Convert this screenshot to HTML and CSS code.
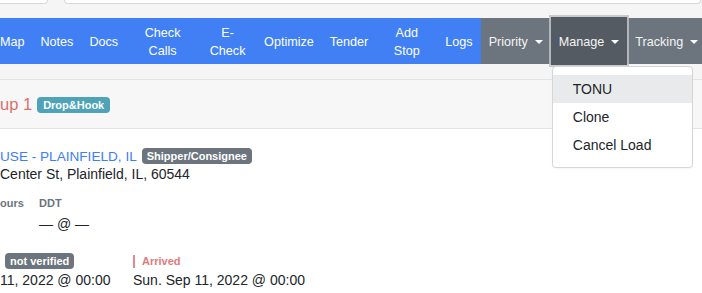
FILE: index.html
```html
<!DOCTYPE html>
<html lang="en">
<head>
    <meta charset="UTF-8">
    <meta name="viewport" content="width=device-width, initial-scale=1.0">
    <title>Load - Group 1</title>
    <link rel="stylesheet" href="styles.css">
</head>
<body>
    <div class="topbar">
        <div class="field field-short"></div>
        <div class="field field-long"></div>
    </div>

    <nav class="navbar">
        <div class="nav-main">
            <a class="nav-link">Map</a>
            <a class="nav-link">Notes</a>
            <a class="nav-link">Docs</a>
            <a class="nav-link wrap w-calls">Check Calls</a>
            <a class="nav-link wrap w-echeck">E-Check</a>
            <a class="nav-link">Optimize</a>
            <a class="nav-link">Tender</a>
            <a class="nav-link wrap w-stop">Add Stop</a>
            <a class="nav-link">Logs</a>
        </div>
        <div class="nav-extra">
            <a class="nav-link toggle">Priority</a>
            <div class="menu-wrap">
                <a class="nav-link toggle active">Manage</a>
                <div class="dropdown">
                    <a class="dropdown-item hover">TONU</a>
                    <a class="dropdown-item">Clone</a>
                    <a class="dropdown-item">Cancel Load</a>
                </div>
            </div>
            <a class="nav-link toggle">Tracking</a>
        </div>
    </nav>

    <div class="gap"></div>

    <div class="card">
        <div class="card-header">
            <span class="group-title">up 1</span>
            <span class="badge badge-info">Drop&amp;Hook</span>
        </div>
        <div class="card-body">
            <div class="stop-title">
                <a class="stop-name">USE - PLAINFIELD, IL</a>
                <span class="badge badge-gray">Shipper/Consignee</span>
            </div>
            <div class="address">Center St, Plainfield, IL, 60544</div>

            <div class="info-row">
                <div class="info-col col-hours">
                    <div class="label">ours</div>
                    <div class="value">&nbsp;</div>
                </div>
                <div class="info-col">
                    <div class="label">DDT</div>
                    <div class="value">— @ —</div>
                </div>
            </div>

            <div class="time-row">
                <div class="time-col col-appt">
                    <div class="time-label"><span class="badge badge-gray">not verified</span></div>
                    <div class="time-value">11, 2022 @ 00:00</div>
                </div>
                <div class="time-col">
                    <div class="time-label"><span class="status-arrived">Arrived</span></div>
                    <div class="time-value">Sun. Sep 11, 2022 @ 00:00</div>
                </div>
            </div>
        </div>
    </div>
</body>
</html>
```

FILE: styles.css
```css
html, body {
    height: 100%;
}

body {
    margin: 0;
    font-family: "Liberation Sans", Arial, sans-serif;
    background-color: #f5f5f5;
    color: #212529;
    display: flex;
    flex-direction: column;
    overflow: hidden;
}

.topbar {
    height: 18px;
    display: flex;
    gap: 16px;
}

.field {
    height: 3px;
    background: #fff;
    border: 1px solid #d8d8d8;
    border-top: none;
    border-radius: 0 0 4px 4px;
}

.field-short {
    width: 47px;
    border-left: none;
    border-radius: 0 0 4px 0;
}

.field-long {
    flex: 1;
    margin-right: 1px;
}

/* navbar */
.navbar {
    height: 46px;
    display: flex;
    font-size: 12.6px;
}

.nav-main {
    display: flex;
    background: #4080f4;
}

.nav-extra {
    flex: 1;
    display: flex;
    background: #6c757d;
    min-width: 0;
}

.nav-link {
    display: flex;
    align-items: center;
    justify-content: center;
    text-align: center;
    padding: 1px 8px 0;
    color: #fff;
    line-height: 18px;
    white-space: nowrap;
}

.nav-main .nav-link:first-child {
    padding-left: 0;
}

.nav-link.wrap {
    white-space: normal;
}

.w-calls {
    width: 57px;
}

.w-echeck {
    width: 41px;
}

.w-stop {
    width: 45px;
}

.toggle::after {
    content: "";
    margin-left: 7px;
    border-top: 4px solid #fff;
    border-left: 4px solid transparent;
    border-right: 4px solid transparent;
}

.toggle {
    color: #f4f4f4;
}

.menu-wrap {
    position: relative;
    display: flex;
}

.nav-link.active {
    background: #545b62;
    box-shadow: 0 0 0 2px rgba(190, 193, 196, 0.85);
    margin: -1px 0;
}

.dropdown {
    position: absolute;
    top: 48px;
    left: 1px;
    width: 139px;
    padding: 8px 0;
    background: #fff;
    border: 1px solid #d6d6d6;
    border-radius: 4px;
    box-shadow: 0 1px 2px rgba(0, 0, 0, 0.04);
    font-size: 14px;
    z-index: 2;
}

.dropdown-item {
    display: block;
    padding: 4px 20px;
    line-height: 20px;
    color: #212529;
}

.dropdown-item.hover {
    background: #e9eaec;
}

.gap {
    height: 15px;
}

/* card */
.card {
    flex: 1;
    display: flex;
    flex-direction: column;
    border-top: 1px solid #e4e4e4;
}

.card-header {
    height: 49px;
    display: flex;
    align-items: center;
    gap: 5px;
    padding-top: 1px;
    box-sizing: border-box;
    background: #f7f7f7;
    border-bottom: 1px solid #e4e4e4;
}

.group-title {
    font-size: 16.5px;
    color: #dc6f6f;
}

.badge {
    display: inline-block;
    padding: 2px 5px;
    font-size: 11px;
    font-weight: bold;
    line-height: 12px;
    color: #fff;
    border-radius: 4px;
}

.badge-info {
    background: #4fa3b8;
    padding: 2px 6px;
}

.badge-gray {
    background: #6c757d;
}

.card-body {
    flex: 1;
    background: #fff;
    padding-top: 18px;
}

.stop-title {
    display: flex;
    align-items: center;
    gap: 5px;
    height: 18px;
    font-size: 13.6px;
}

.stop-name {
    color: #3d7ef5;
}

.address {
    font-size: 14px;
    line-height: 18px;
}

.info-row,
.time-row {
    display: flex;
}

.info-row {
    margin-top: 13px;
}

.col-hours {
    width: 39px;
}

.label {
    font-size: 11px;
    font-weight: bold;
    color: #6c757d;
    line-height: 14px;
}

.value {
    margin-top: 6px;
    font-size: 14px;
    line-height: 16px;
}

.time-row {
    margin-top: 21px;
}

.col-appt {
    width: 133px;
}

.col-appt .time-label {
    padding-left: 5px;
}

.time-label {
    height: 16px;
    display: flex;
    align-items: center;
}

.status-arrived {
    border-left: 2px solid #e48a8a;
    padding-left: 7px;
    font-size: 11px;
    font-weight: bold;
    color: #de7b7b;
    line-height: 13px;
}

.time-value {
    margin-top: 3px;
    font-size: 14px;
    line-height: 16px;
}
```
